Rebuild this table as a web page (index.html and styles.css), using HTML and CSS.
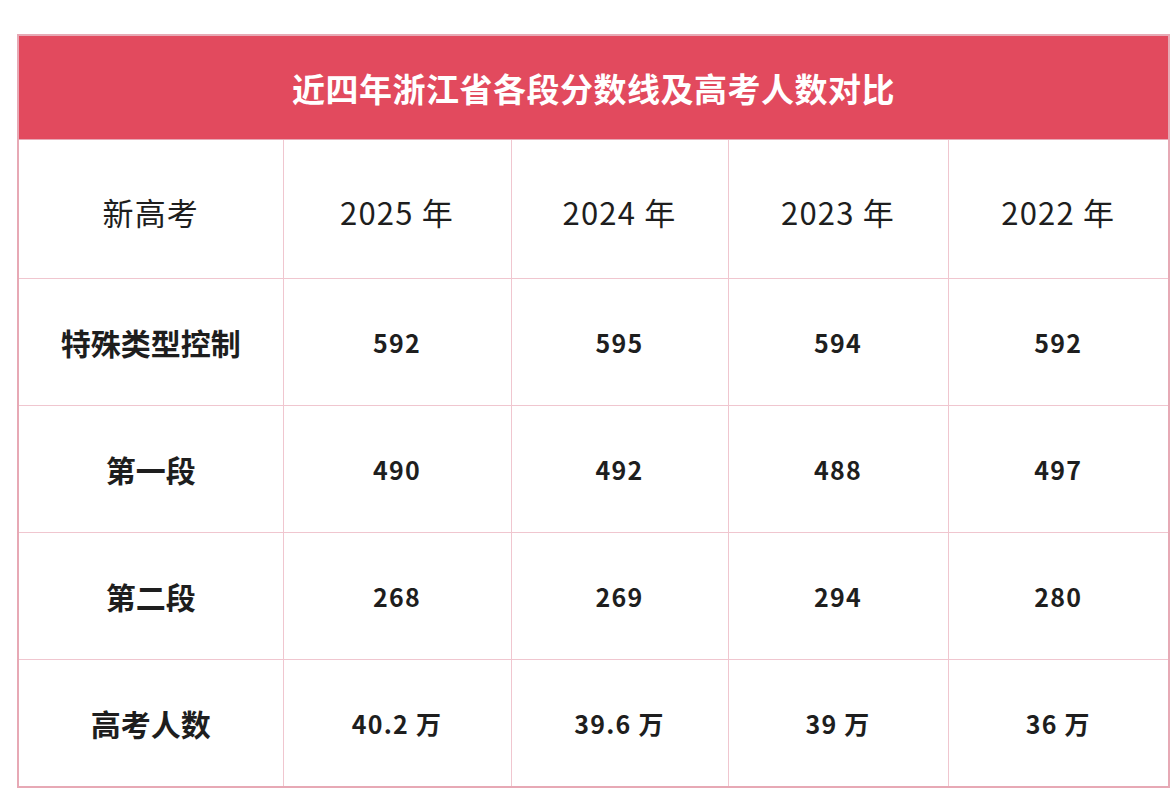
FILE: index.html
```html
<!DOCTYPE html>
<html lang="zh-CN">
<head>
<meta charset="utf-8">
<title>近四年浙江省各段分数线及高考人数对比</title>
<link rel="stylesheet" href="styles.css">
</head>
<body>
<div class="page">
  <table class="score-table">
    <colgroup>
      <col class="c-label">
      <col class="c-2025">
      <col class="c-2024">
      <col class="c-2023">
      <col class="c-2022">
    </colgroup>
    <thead>
      <tr class="title-row">
        <th colspan="5">近四年浙江省各段分数线及高考人数对比</th>
      </tr>
      <tr class="year-row">
        <th>新高考</th>
        <th>2025 年</th>
        <th>2024 年</th>
        <th>2023 年</th>
        <th>2022 年</th>
      </tr>
    </thead>
    <tbody>
      <tr>
        <th>特殊类型控制</th>
        <td>592</td><td>595</td><td>594</td><td>592</td>
      </tr>
      <tr>
        <th>第一段</th>
        <td>490</td><td>492</td><td>488</td><td>497</td>
      </tr>
      <tr>
        <th>第二段</th>
        <td>268</td><td>269</td><td>294</td><td>280</td>
      </tr>
      <tr>
        <th>高考人数</th>
        <td>40.2 万</td><td>39.6 万</td><td>39 万</td><td>36 万</td>
      </tr>
    </tbody>
  </table>
</div>
</body>
</html>
```
FILE: styles.css
```css
html, body {
  margin: 0;
  padding: 0;
  background: #ffffff;
}

body {
  font-family: "Noto Sans CJK SC", "Noto Sans", sans-serif;
  color: #1e1e1e;
}

.page {
  padding: 34px 8px 0 17px;
}

.score-table {
  border-collapse: collapse;
  table-layout: fixed;
  width: 1151px;
  border: 2px solid #e7a9b5;
}

.c-label { width: 265px; }
.c-2025 { width: 228px; }
.c-2024 { width: 217px; }
.c-2023 { width: 220px; }
.c-2022 { width: 221px; }

.score-table th,
.score-table td {
  border: 1px solid #f0c6cf;
  text-align: center;
  padding: 0;
}

.title-row th {
  height: 102px;
  background: #e24a5e;
  color: #ffffff;
  font-size: 33px;
  font-weight: 700;
  letter-spacing: 0.5px;
  border-color: #e7a9b5;
  padding-top: 1px;
}

.year-row th {
  height: 134px;
  font-size: 31px;
  font-weight: 400;
  letter-spacing: 1.2px;
  padding-top: 4px;
}

tbody th {
  height: 126px;
  font-size: 30px;
  font-weight: 700;
  padding-top: 8px;
}

tbody td {
  height: 126px;
  font-size: 25px;
  font-weight: 700;
  letter-spacing: 1.2px;
  padding-top: 8px;
}
```
